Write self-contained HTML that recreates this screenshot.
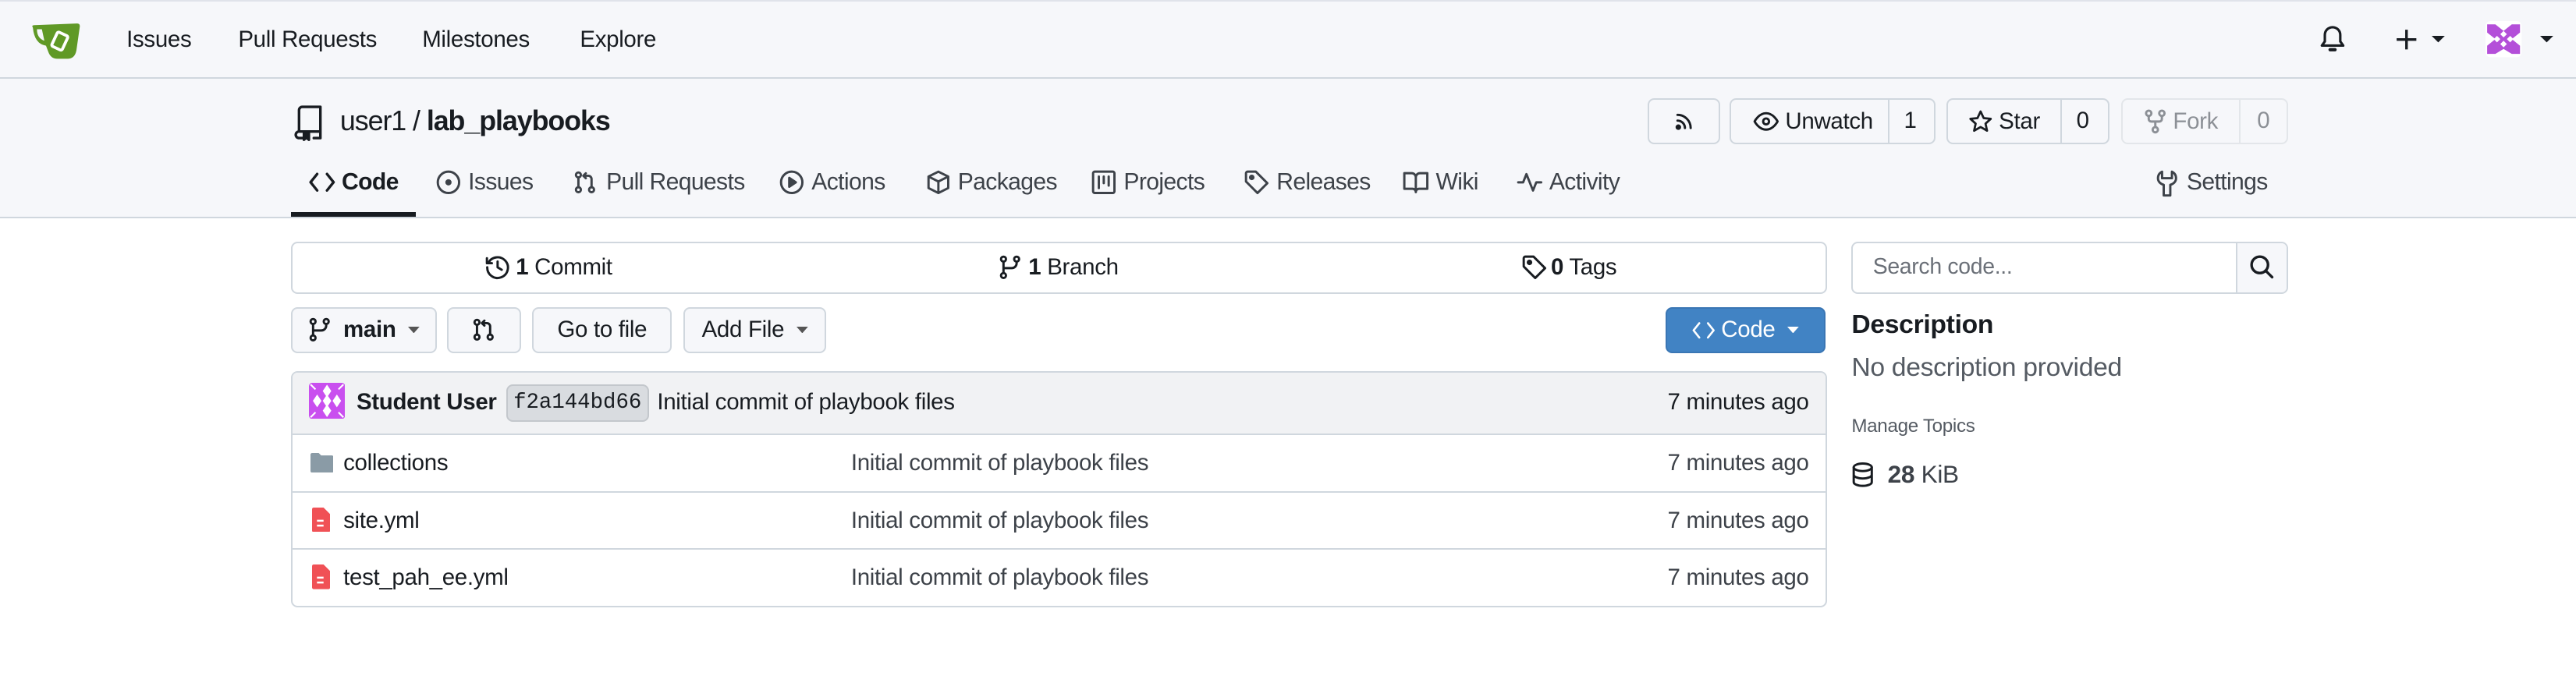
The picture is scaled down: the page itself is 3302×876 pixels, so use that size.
<!DOCTYPE html>
<html><head><meta charset="utf-8"><style>
*{box-sizing:border-box;margin:0;padding:0}
html,body{width:3302px;height:876px;overflow:hidden;background:#fff}
#r{zoom:2.10587;width:1568px;height:416px;position:relative;font-family:"Liberation Sans",sans-serif;color:#181c21;font-size:14px;letter-spacing:-0.15px}
.a{position:absolute;white-space:nowrap}
svg{display:block}
.ic{fill:none;stroke:currentColor;stroke-width:1.4;stroke-linecap:round;stroke-linejoin:round}
.btn{position:absolute;border:1px solid #d0d7de;border-radius:4px;background:#f6f7fa;height:28px;display:flex;align-items:center;justify-content:center;font-size:14px}
.row{position:absolute;left:177px;width:934px;height:35px;border-top:1px solid #d0d7de}
.t{font-size:14.3px;letter-spacing:-0.3px}
</style></head><body><div id="r">
<!-- navbar -->
<div class="a" style="left:0;top:0;width:1568px;height:48px;background:#f6f7fa;border-top:1px solid #e0e3ea;border-bottom:1px solid #d0d7de"></div>
<svg class="a" style="left:19px;top:13px" width="30" height="24" viewBox="0 0 30 24"><path d="M1 4 Q0 2.5 2 2.5 L28 1.5 Q30 1.5 29.5 4 L27.5 18 Q26.5 23 22 23 L16 23 Q12 23 10.5 19 L9 15 Q2 14 1 4Z" fill="#609926"/><path d="M3.5 5 Q3.5 10.5 8 12 L6.5 5Z" fill="#f6f7fa"/><rect x="14" y="7.5" width="7" height="9.5" rx="1" transform="rotate(25 17.5 12)" fill="none" stroke="#fff" stroke-width="1.8"/></svg>
<div class="a" style="left:77px;top:16px">Issues</div>
<div class="a" style="left:145px;top:16px">Pull Requests</div>
<div class="a" style="left:257px;top:16px">Milestones</div>
<div class="a" style="left:353px;top:16px">Explore</div>
<svg class="a ic" style="left:1411px;top:14px;stroke-width:1.5" width="18" height="19" viewBox="0 0 18 19"><path d="M2.5 14h13l-1.8-2.5V7.5a4.7 4.7 0 0 0-9.4 0v4Z"/><path d="M7.5 16.5h3" stroke-width="2"/></svg>
<svg class="a" style="left:1458px;top:17px" width="14" height="14" viewBox="0 0 14 14"><path d="M7 1v12M1 7h12" stroke="#181c21" stroke-width="1.6"/></svg>
<svg class="a" style="left:1480px;top:22px" width="8" height="5"><path d="M0 0h8L4 4Z" fill="#181c21"/></svg>
<svg class="a" style="left:1513px;top:13px" width="22" height="22" viewBox="0 0 22 22"><rect width="22" height="22" rx="3" fill="#fff"/><path d="M1 2h5l5 4 5-4h5v5l-5 4 5 4v5h-5l-5-3-5 3H1v-5l5-4-5-4Z" fill="#b44fd9"/><path d="M11 6l2 2-2 2-2-2ZM11 12l2 2-2 2-2-2ZM7 9l2 2-2 2-2-2ZM15 9l2 2-2 2-2-2Z" fill="#fff"/></svg>
<svg class="a" style="left:1546px;top:22px" width="8" height="5"><path d="M0 0h8L4 4Z" fill="#181c21"/></svg>
<!-- repo header -->
<div class="a" style="left:0;top:48px;width:1568px;height:85px;background:#f6f7fa;border-bottom:1px solid #d0d7de"></div>
<svg class="a ic" style="left:179px;top:64px;stroke-width:1.6" width="18" height="22" viewBox="0 0 18 22"><path d="M3 16V3a2 2 0 0 1 2-2h11v15H3a2 2 0 0 0 0 4h2M16 16v4h-4"/><path d="M6 17v4l1.5-1.3L9 21v-4Z" fill="#181c21"/></svg>
<div class="a" style="left:207px;top:64px;font-size:17px;letter-spacing:-0.5px">user1 / <b>lab_playbooks</b></div>
<div class="btn" style="left:1003px;top:60px;width:44px"><svg class="ic" width="14" height="14" viewBox="0 0 14 14"><path d="M3 3a8 8 0 0 1 8 8M3 6.5a4.5 4.5 0 0 1 4.5 4.5"/><circle cx="3.5" cy="10.5" r="1" fill="#181c21"/></svg></div>
<div class="btn" style="left:1053px;top:60px;width:125px;justify-content:flex-start;padding-left:13px"><svg class="ic" width="16" height="14" viewBox="0 0 16 14"><path d="M1 7s2.5-5 7-5 7 5 7 5-2.5 5-7 5-7-5-7-5Z"/><circle cx="8" cy="7" r="1.8"/></svg>&nbsp;Unwatch<span style="position:absolute;left:95px;top:0;height:26px;border-left:1px solid #d0d7de;padding-left:9px;line-height:26px">1</span></div>
<div class="btn" style="left:1185px;top:60px;width:99px;justify-content:flex-start;padding-left:12px"><svg class="ic" width="15" height="15" viewBox="0 0 16 16"><path d="M8 1.5l2 4.3 4.6.5-3.4 3.1 1 4.6L8 11.6 3.8 14l1-4.6L1.4 6.3 6 5.8Z"/></svg>&nbsp;Star<span style="position:absolute;left:68px;top:0;height:26px;border-left:1px solid #d0d7de;padding-left:9px;line-height:26px">0</span></div>
<div class="btn" style="left:1291px;top:60px;width:102px;justify-content:flex-start;padding-left:13px;color:#8c9096;border-color:#e3e6ea"><svg class="ic" width="14" height="16" viewBox="0 0 14 16"><circle cx="3" cy="3" r="1.6"/><circle cx="11" cy="3" r="1.6"/><circle cx="7" cy="13" r="1.6"/><path d="M3 5v1.5a1.5 1.5 0 0 0 1.5 1.5h5A1.5 1.5 0 0 0 11 6.5V5M7 8v3"/></svg>&nbsp;Fork<span style="position:absolute;left:71px;top:0;height:26px;border-left:1px solid #e3e6ea;padding-left:10px;line-height:26px">0</span></div>
<!-- tabs -->
<svg class="a ic" style="left:188px;top:104px;stroke-width:1.6" width="16" height="14" viewBox="0 0 16 14"><path d="M5 2L1 7l4 5M11 2l4 5-4 5"/></svg>
<div class="a t" style="left:208px;top:103px;font-weight:bold">Code</div>
<div class="a" style="left:177px;top:129px;width:76px;height:3px;background:#181c21"></div>
<div style="color:#3d4249">
<svg class="a ic" style="left:265px;top:103px" width="16" height="16" viewBox="0 0 16 16"><circle cx="8" cy="8" r="6.5"/><circle cx="8" cy="8" r="1.2" fill="currentColor"/></svg>
<div class="a t" style="left:285px;top:103px">Issues</div>
<svg class="a ic" style="left:348px;top:103px" width="16" height="16" viewBox="0 0 16 16"><circle cx="4" cy="3.5" r="1.5"/><circle cx="4" cy="12.5" r="1.5"/><circle cx="12" cy="12.5" r="1.5"/><path d="M4 5v6M12 11V6a2 2 0 0 0-2-2H7M8.5 2.5 7 4l1.5 1.5"/></svg>
<div class="a t" style="left:369px;top:103px">Pull Requests</div>
<svg class="a ic" style="left:474px;top:103px" width="16" height="16" viewBox="0 0 16 16"><circle cx="8" cy="8" r="6.5"/><path d="M6.5 5.3v5.4L10.5 8Z" fill="currentColor"/></svg>
<div class="a t" style="left:494px;top:103px">Actions</div>
<svg class="a ic" style="left:563px;top:103px" width="16" height="16" viewBox="0 0 16 16"><path d="M8 1.5l6 3v7l-6 3-6-3v-7ZM2 4.5l6 3 6-3M8 7.5v7"/></svg>
<div class="a t" style="left:583px;top:103px">Packages</div>
<svg class="a ic" style="left:664px;top:103px" width="16" height="16" viewBox="0 0 16 16"><rect x="1.5" y="1.5" width="13" height="13" rx="1"/><path d="M5 4.5v7M8 4.5v4M11 4.5v5.5"/></svg>
<div class="a t" style="left:684px;top:103px">Projects</div>
<svg class="a ic" style="left:757px;top:103px" width="16" height="16" viewBox="0 0 16 16"><path d="M1.5 2.5v5l7 7 6-6-7-7h-5a1 1 0 0 0-1 1Z"/><circle cx="5" cy="5" r="1" fill="currentColor"/></svg>
<div class="a t" style="left:777px;top:103px">Releases</div>
<svg class="a ic" style="left:854px;top:104px" width="16" height="14" viewBox="0 0 16 14"><path d="M1 1.5h4.5A2.5 2.5 0 0 1 8 4v9a2 2 0 0 0-2-2H1ZM15 1.5h-4.5A2.5 2.5 0 0 0 8 4v9a2 2 0 0 1 2-2h5Z"/></svg>
<div class="a t" style="left:874px;top:103px">Wiki</div>
<svg class="a ic" style="left:923px;top:103px" width="16" height="16" viewBox="0 0 16 16"><path d="M1 8h3l2-5 4 10 2-5h3"/></svg>
<div class="a t" style="left:943px;top:103px">Activity</div>
<svg class="a ic" style="left:1312px;top:103px" width="14" height="17" viewBox="0 0 14 17"><path d="M4 1.5C2 2.5 1.5 4 1.5 5.5 1.5 7.5 3 9 5 9.5V16h4V9.5c2-.5 3.5-2 3.5-4C12.5 4 12 2.5 10 1.5v4H4Z"/></svg>
<div class="a t" style="left:1331px;top:103px">Settings</div>
</div>
<!-- stats -->
<div class="a" style="left:177px;top:147px;width:935px;height:32px;border:1px solid #d0d7de;border-radius:4px"></div>
<svg class="a ic" style="left:295px;top:155px" width="16" height="16" viewBox="0 0 16 16"><path d="M2.3 5.5A6.3 6.3 0 1 1 1.7 8M1.5 2.5v3h3M8 4.5V8l2.5 1.5"/></svg>
<div class="a" style="left:314px;top:155px"><b>1</b> Commit</div>
<svg class="a ic" style="left:608px;top:155px" width="14" height="16" viewBox="0 0 14 16"><circle cx="3" cy="13" r="1.5"/><circle cx="3" cy="3" r="1.5"/><circle cx="11" cy="3" r="1.5"/><path d="M3 4.5v7M11 4.5v1a3 3 0 0 1-3 3H3"/></svg>
<div class="a" style="left:626px;top:155px"><b>1</b> Branch</div>
<svg class="a ic" style="left:926px;top:155px" width="16" height="16" viewBox="0 0 16 16"><path d="M1.5 2.5v5l7 7 6-6-7-7h-5a1 1 0 0 0-1 1Z"/><circle cx="5" cy="5" r="1" fill="currentColor"/></svg>
<div class="a" style="left:944px;top:155px"><b>0</b> Tags</div>
<!-- branch row -->
<div class="btn" style="left:177px;top:187px;width:89px"><svg class="ic" width="14" height="16" viewBox="0 0 14 16"><circle cx="3" cy="13" r="1.5"/><circle cx="3" cy="3" r="1.5"/><circle cx="11" cy="3" r="1.5"/><path d="M3 4.5v7M11 4.5v1a3 3 0 0 1-3 3H3"/></svg>&nbsp;&nbsp;<b>main</b>&nbsp;&nbsp;<svg width="7" height="4"><path d="M0 0h7L3.5 4Z" fill="#555"/></svg></div>
<div class="btn" style="left:272px;top:187px;width:45px"><svg class="ic" width="16" height="16" viewBox="0 0 16 16"><circle cx="4" cy="3.5" r="1.5"/><circle cx="4" cy="12.5" r="1.5"/><circle cx="12" cy="12.5" r="1.5"/><path d="M4 5v6M12 11V6a2 2 0 0 0-2-2H7M8.5 2.5 7 4l1.5 1.5"/></svg></div>
<div class="btn" style="left:324px;top:187px;width:85px">Go to file</div>
<div class="btn" style="left:416px;top:187px;width:87px">Add File&nbsp;&nbsp;<svg width="7" height="4"><path d="M0 0h7L3.5 4Z" fill="#555"/></svg></div>
<div class="btn" style="left:1014px;top:187px;width:97px;background:#4183c4;border-color:#3a76b4;color:#fff"><svg class="ic" width="14" height="14" viewBox="0 0 16 14" style="stroke:#fff"><path d="M5 2L1 7l4 5M11 2l4 5-4 5"/></svg>&nbsp;Code&nbsp;&nbsp;<svg width="7" height="4"><path d="M0 0h7L3.5 4Z" fill="#fff"/></svg></div>
<!-- table -->
<div class="a" style="left:177px;top:226px;width:935px;height:144px;border:1px solid #d0d7de;border-radius:4px;overflow:hidden">
 <div style="height:38px;background:#f1f2f4;border-bottom:1px solid #d0d7de"></div>
</div>
<div class="row" style="top:299px"></div><div class="row" style="top:334px;border-top:1px solid #d0d7de"></div>
<svg class="a" style="left:188px;top:233px" width="22" height="22" viewBox="0 0 22 22"><rect width="22" height="22" rx="2" fill="#c94fef"/><path d="M11 2l2 3-2 3-2-3ZM5 8l2 3-2 3-2-3ZM17 8l2 3-2 3-2-3ZM11 8l2 3-2 3-2-3ZM11 14l2 3-2 3-2-3ZM1 1l3 3M21 1l-3 3M1 21l3-3M21 21l-3-3" fill="#fff" stroke="#fff"/></svg>
<div class="a" style="left:217px;top:237px;font-weight:bold">Student User</div>
<div class="a" style="left:308px;top:234px;width:87px;height:23px;background:#d9dce0;border:1px solid #c3c7cc;border-radius:4px;font-family:'Liberation Mono',monospace;font-size:13px;line-height:21px;text-align:center;letter-spacing:0">f2a144bd66</div>
<div class="a" style="left:400px;top:237px">Initial commit of playbook files</div>
<div class="a" style="right:467px;top:237px">7 minutes ago</div>
<svg class="a" style="left:189px;top:276px" width="14" height="12" viewBox="0 0 14 12"><path d="M0 1a1 1 0 0 1 1-1h4l1.5 1.5H13a1 1 0 0 1 1 1V11a1 1 0 0 1-1 1H1a1 1 0 0 1-1-1Z" fill="#8a9ba6"/></svg>
<div class="a" style="left:209px;top:274px">collections</div>
<div class="a" style="left:518px;top:274px;color:#3d4249">Initial commit of playbook files</div>
<div class="a" style="right:467px;top:274px;color:#3d4249">7 minutes ago</div>
<svg class="a" style="left:190px;top:309px" width="11" height="15" viewBox="0 0 11 15"><path d="M0 1a1 1 0 0 1 1-1h6l4 4v10a1 1 0 0 1-1 1H1a1 1 0 0 1-1-1Z" fill="#f05156"/><path d="M3 8h4M3 11h4" stroke="#fff" stroke-width="1.2"/></svg>
<div class="a" style="left:209px;top:309px">site.yml</div>
<div class="a" style="left:518px;top:309px;color:#3d4249">Initial commit of playbook files</div>
<div class="a" style="right:467px;top:309px;color:#3d4249">7 minutes ago</div>
<svg class="a" style="left:190px;top:344px" width="11" height="15" viewBox="0 0 11 15"><path d="M0 1a1 1 0 0 1 1-1h6l4 4v10a1 1 0 0 1-1 1H1a1 1 0 0 1-1-1Z" fill="#f05156"/><path d="M3 8h4M3 11h4" stroke="#fff" stroke-width="1.2"/></svg>
<div class="a" style="left:209px;top:344px">test_pah_ee.yml</div>
<div class="a" style="left:518px;top:344px;color:#3d4249">Initial commit of playbook files</div>
<div class="a" style="right:467px;top:344px;color:#3d4249">7 minutes ago</div>
<!-- sidebar -->
<div class="a" style="left:1127px;top:147px;width:266px;height:32px;border:1px solid #d0d7de;border-radius:4px;overflow:hidden"><div style="position:absolute;right:0;top:0;width:31px;height:30px;background:#f6f7fa;border-left:1px solid #d0d7de"></div></div>
<svg class="a ic" style="left:1369px;top:155px;stroke-width:1.6" width="15" height="15" viewBox="0 0 15 15"><circle cx="6.5" cy="6.5" r="5"/><path d="M10 10l4 4"/></svg>
<div class="a" style="left:1140px;top:155px;color:#6b7078;font-size:13.5px">Search code...</div>
<div class="a" style="left:1127px;top:189px;font-size:16px;font-weight:bold">Description</div>
<div class="a" style="left:1127px;top:215px;font-size:16px;color:#555b63">No description provided</div>
<div class="a" style="left:1127px;top:253px;font-size:11.5px;color:#555b63">Manage Topics</div>
<svg class="a ic" style="left:1127px;top:281px" width="14" height="16" viewBox="0 0 14 16"><ellipse cx="7" cy="3.5" rx="5.5" ry="2.3"/><path d="M1.5 3.5v9c0 1.3 2.5 2.3 5.5 2.3s5.5-1 5.5-2.3v-9M1.5 8c0 1.3 2.5 2.3 5.5 2.3s5.5-1 5.5-2.3"/></svg>
<div class="a" style="left:1149px;top:280px;font-size:15px;color:#3d4249"><b>28</b> KiB</div>
</div></body></html>
